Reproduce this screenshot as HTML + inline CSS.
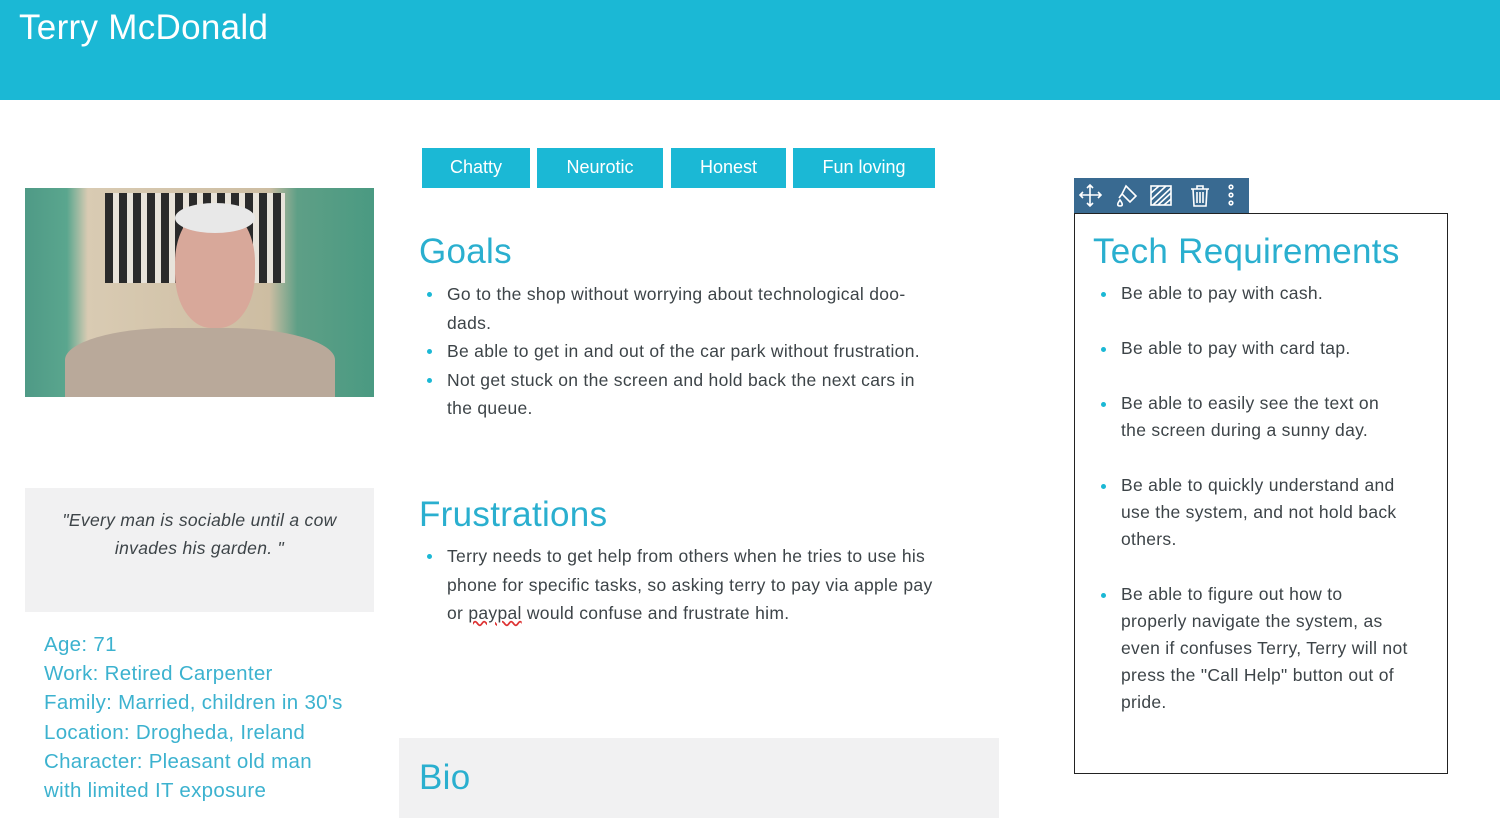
<!DOCTYPE html>
<html><head><meta charset="utf-8"><style>
*{margin:0;padding:0;box-sizing:border-box}
body{width:1500px;height:808px;overflow:hidden;background:#fff;font-family:"Liberation Sans",sans-serif;position:relative;color:#3d4448}
.hdr{position:absolute;left:0;top:0;width:1500px;height:100px;background:#1bb8d5}
.hdr h1{position:absolute;left:19px;top:8px;font-weight:normal;font-size:35px;color:#fff;letter-spacing:0.3px}
.tag{position:absolute;top:148px;height:40px;background:#1bb8d5;color:#fff;font-size:18px;line-height:38px;text-align:center}
h2{position:absolute;font-weight:normal;color:#2aafcf;font-size:35px;letter-spacing:0.3px}
ul{position:absolute;list-style:none;font-size:17.5px;line-height:28.5px;white-space:nowrap;letter-spacing:0.3px}
li{position:relative;padding-left:27px}
li:before{content:"";position:absolute;left:7px;top:12px;width:5px;height:5px;border-radius:50%;background:#1bb8d5}
.info{position:absolute;left:44px;top:630px;color:#3cb2cf;font-size:20.5px;line-height:29.2px;letter-spacing:0.3px}
</style></head><body>
<div class="hdr"><h1>Terry McDonald</h1></div>
<div class="tag" style="left:422px;width:108px">Chatty</div>
<div class="tag" style="left:537px;width:126px">Neurotic</div>
<div class="tag" style="left:671px;width:115px">Honest</div>
<div class="tag" style="left:793px;width:142px">Fun loving</div>

<div style="position:absolute;left:25px;top:188px;width:349px;height:209px;background:linear-gradient(90deg,#4f9a86 0,#5aa68e 12%,#d9cbb3 18%,#cdbda2 70%,#5e9f86 78%,#4a9a82 100%);overflow:hidden">
 <div style="position:absolute;left:80px;top:5px;width:180px;height:90px;background:repeating-linear-gradient(90deg,#2a2a2a 0 8px,#e8e3da 8px 14px)"></div>
 <div style="position:absolute;left:40px;top:140px;width:270px;height:80px;border-radius:40% 40% 0 0;background:#b9a99a"></div>
 <div style="position:absolute;left:150px;top:20px;width:80px;height:120px;border-radius:45%;background:#d8a89a"></div>
 <div style="position:absolute;left:150px;top:15px;width:80px;height:30px;border-radius:50%;background:#e8e8e8"></div>
</div>

<div style="position:absolute;left:25px;top:488px;width:349px;height:124px;background:#f1f1f2"></div>
<div style="position:absolute;left:25px;top:506px;width:349px;text-align:center;font-style:italic;font-size:17.5px;line-height:28px;letter-spacing:0.3px">"Every man is sociable until a cow<br>invades his garden. "</div>
<div class="info">Age: 71<br>Work: Retired Carpenter<br>Family: Married, children in 30's<br>Location: Drogheda, Ireland<br>Character: Pleasant old man<br>with limited IT exposure</div>

<h2 style="left:419px;top:232px">Goals</h2>
<ul style="left:420px;top:280px">
<li>Go to the shop without worrying about technological doo-<br>dads.</li>
<li>Be able to get in and out of the car park without frustration.</li>
<li>Not get stuck on the screen and hold back the next cars in<br>the queue.</li></ul>
<h2 style="left:419px;top:495px">Frustrations</h2>
<ul style="left:420px;top:542px">
<li>Terry needs to get help from others when he tries to use his<br>phone for specific tasks, so asking terry to pay via apple pay<br>or <span style="text-decoration:underline wavy #d33">paypal</span> would confuse and frustrate him.</li></ul>
<div style="position:absolute;left:399px;top:738px;width:600px;height:80px;background:#f1f1f2"></div>
<h2 style="left:419px;top:758px">Bio</h2>

<div style="position:absolute;left:1074px;top:178px;width:175px;height:35px;background:#396a91"></div>
<svg style="position:absolute;left:1074px;top:178px" width="175" height="35" fill="none" stroke="#fff" stroke-width="1.6">
<path d="M16 7v21M6 17h21M13 10l3-3 3 3M13 25l3 3 3-3M9 14l-3 3 3 3M24 14l3 3-3 3"/>
<path d="M52 8l10 10-6 6-8-8zM48 16l-3 4M46 22c-3 4-3 6 0 6s3-2 0-6z"/>
<rect x="77" y="8" width="20" height="19"/><path d="M79 27L97 10M77 22L92 8M84 27L97 15M77 15L85 8M90 27l7-6"/>
<path d="M117 11h18M123 11V8h6v3M119 11l1 17h12l1-17M123 14v11M126 14v11M129 14v11"/>
<circle cx="157" cy="9" r="1.8"/><circle cx="157" cy="17" r="1.8"/><circle cx="157" cy="25" r="1.8"/>
</svg>
<div style="position:absolute;left:1074px;top:213px;width:374px;height:561px;border:1px solid #222"></div>
<h2 style="left:1093px;top:232px">Tech Requirements</h2>
<ul style="left:1094px;top:280px;line-height:27px">
<li style="margin-bottom:28px">Be able to pay with cash.</li>
<li style="margin-bottom:28px">Be able to pay with card tap.</li>
<li style="margin-bottom:28px">Be able to easily see the text on<br>the screen during a sunny day.</li>
<li style="margin-bottom:28px">Be able to quickly understand and<br>use the system, and not hold back<br>others.</li>
<li>Be able to figure out how to<br>properly navigate the system, as<br>even if confuses Terry, Terry will not<br>press the "Call Help" button out of<br>pride.</li></ul>
</body></html>
